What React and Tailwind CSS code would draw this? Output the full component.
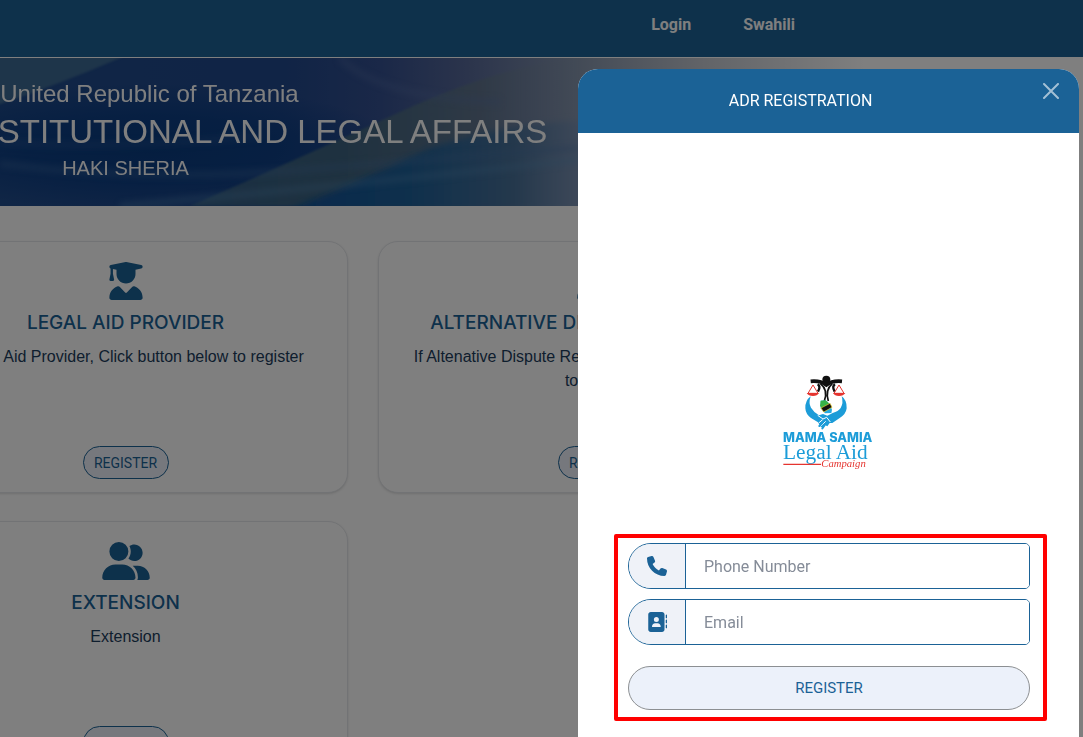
import React from 'react'
import { FaUserGraduate, FaUserGroup, FaPhone, FaAddressBook } from 'react-icons/fa6'

const cards = [
  {
    icon: FaUserGraduate,
    title: 'LEGAL AID PROVIDER',
    text: 'If Legal Aid Provider, Click button below to register',
  },
  {
    icon: FaUserGroup,
    title: 'ALTERNATIVE DISPUTE RESOLUTION',
    text: 'If Altenative Dispute Resolution, Click a button below to register',
  },
  { icon: FaUserGroup, title: 'EXTENSION', text: 'Extension', newRow: true },
]

function Navbar() {
  return (
    <nav className="flex h-[58px] justify-end gap-[52px] border-b border-white bg-[#1c6296] pt-[13px] pr-72 font-['Roboto',sans-serif] text-base font-bold text-white">
      <a href="#login">Login</a>
      <a href="#swahili">Swahili</a>
    </nav>
  )
}

function BannerArt() {
  return (
    <svg className="absolute inset-0 h-full w-full" viewBox="0 0 1083 148" preserveAspectRatio="none" aria-hidden="true">
      <defs>
        <linearGradient id="sky" x1="0" x2="1" y1="0" y2="0">
          <stop offset="0" stopColor="#204c8c" />
          <stop offset="0.26" stopColor="#20488c" />
          <stop offset="0.35" stopColor="#345090" />
          <stop offset="0.43" stopColor="#566898" />
          <stop offset="0.53" stopColor="#8494ac" />
          <stop offset="0.65" stopColor="#c4c8d0" />
          <stop offset="0.8" stopColor="#ffffff" />
        </linearGradient>
        <linearGradient id="wave" x1="0" x2="1" y1="0" y2="0">
          <stop offset="0" stopColor="#0e5098" />
          <stop offset="0.4" stopColor="#1e6098" />
          <stop offset="0.75" stopColor="#487098" />
          <stop offset="1" stopColor="#8094b4" />
        </linearGradient>
        <linearGradient id="band" x1="0" x2="1" y1="0" y2="0">
          <stop offset="0" stopColor="#346088" />
          <stop offset="0.4" stopColor="#3e6480" />
          <stop offset="0.75" stopColor="#60758c" stopOpacity="0.9" />
          <stop offset="1" stopColor="#8494ac" stopOpacity="0" />
        </linearGradient>
        <radialGradient id="deep" cx="0.5" cy="0.5" r="0.5">
          <stop offset="0" stopColor="#0a3c80" />
          <stop offset="0.5" stopColor="#0c3e84" stopOpacity="0.9" />
          <stop offset="1" stopColor="#0c3c84" stopOpacity="0" />
        </radialGradient>
        <filter id="soft" x="-10%" y="-60%" width="120%" height="220%">
          <feGaussianBlur stdDeviation="3" />
        </filter>
        <filter id="edge" x="-5%" y="-5%" width="110%" height="110%">
          <feGaussianBlur stdDeviation="1" />
        </filter>
      </defs>
      <rect width="1083" height="148" fill="url(#sky)" />
      <ellipse cx="150" cy="90" rx="250" ry="64" fill="url(#deep)" />
      <path d="M-10 -10H140L120 0Q60 26 0 46L-10 48Z" fill="#427096" opacity="0.85" filter="url(#edge)" />
      <path d="M190 148Q300 100 400 54T579 0V148Z" fill="url(#band)" filter="url(#edge)" />
      <path d="M290 152Q370 118 430 90Q500 66 586 62V152Z" fill="url(#wave)" filter="url(#soft)" />
      <g fill="none" strokeWidth="6" filter="url(#soft)">
        <path d="M0 106Q150 124 300 112T579 90" stroke="#4a76a8" opacity="0.4" />
        <path d="M120 148Q300 132 579 102" stroke="#5a8cb8" opacity="0.4" />
        <path d="M340 0Q380 40 500 44" stroke="#5a74a8" opacity="0.4" />
        <path d="M0 84Q120 92 260 78" stroke="#3a64a0" opacity="0.3" />
      </g>
    </svg>
  )
}

function Banner() {
  return (
    <header className="relative h-[148px] overflow-hidden">
      <BannerArt />
      <div className="relative -mr-[215px] -ml-[97px] grid grid-cols-3 gap-x-[30px] pt-4 text-white">
        <div className="flex flex-col items-center whitespace-nowrap">
          <p className="text-2xl leading-10">The United Republic of Tanzania</p>
          <h1 className="text-[33px] leading-9">MINISTRY OF CONSTITUTIONAL AND LEGAL AFFAIRS</h1>
          <p className="text-xl leading-9">HAKI SHERIA</p>
        </div>
      </div>
    </header>
  )
}

function Card({ icon: Icon, title, text, newRow }) {
  return (
    <section
      className={`flex h-[252px] flex-col items-center rounded-[20px] border border-gray-200 bg-white px-8 pt-5 pb-[13px] text-center shadow ${newRow ? 'col-start-1' : ''}`}
    >
      <Icon className="h-[38px] w-12 shrink-0 text-[#1b6296]" />
      <h2 className="mt-[5px] font-['Inter',sans-serif] text-[19px] leading-9 font-medium whitespace-nowrap text-[#1b6296]">{title}</h2>
      <p className="mt-1 text-base leading-6 text-[#1c3c5c]">{text}</p>
      <button
        type="button"
        className="mt-auto h-[33px] w-[86px] shrink-0 rounded-full border border-[#1b6296] bg-[#ecf1fa] font-['Roboto',sans-serif] text-sm text-[#1b6296]"
      >
        REGISTER
      </button>
    </section>
  )
}

function CampaignLogo() {
  return (
    <svg className="mx-auto h-[115px] w-[115px]" viewBox="0 0 345 345" role="img" aria-label="Mama Samia Legal Aid Campaign">
      {/* figure holding the scales */}
      <circle cx="166" cy="44" r="12" fill="#111" />
      <g fill="none" stroke="#111" strokeLinecap="butt">
        <path d="M119 49Q148 46 166 60Q184 46 213 49" strokeWidth="11" />
        <path d="M148 56Q172 74 160 108M184 56Q162 74 172 108" strokeWidth="5" />
        <path d="M140 58Q150 64 141 80M192 58Q182 64 191 80" strokeWidth="7" />
      </g>
      <g fill="none" stroke="#e5342f" strokeWidth="3">
        <path d="M126 60L111 85H141ZM204 60L189 85H219Z" />
      </g>
      <path d="M107 84H144Q139 93 126 93Q112 93 107 84ZM186 84H223Q217 93 204 93Q191 93 186 84Z" fill="#e5342f" />
      {/* map */}
      <path d="M149 107L164 106L176 117L183 134L181 144L162 145L149 130Z" fill="#26a9e0" />
      <path d="M149 107L164 106L176 117L152 132L147 122Z" fill="#35b34a" />
      <path d="M150 129L177 115L183 127L158 141Z" fill="#111" stroke="#f4d72c" strokeWidth="2" />
      {/* hands */}
      <path d="M119 94Q102 107 103 130Q104 148 120 159L141 172L148 184L156 190L162 180L169 184L176 174L184 174L205 160Q225 148 227 130Q228 105 212 94Q218 114 209 129Q202 139 185 144L169 152L156 147L144 151Q127 140 120 128Q112 115 119 94Z" fill="#1c9cd8" />
      <path d="M140 151L156 162L167 157L178 171M143 174L155 164M149 184L164 169" fill="none" stroke="#fff" strokeWidth="3" />
      <path d="M145 183L154 174M154 190L164 176" stroke="#1c9cd8" strokeWidth="6" strokeLinecap="round" />
      <text x="36" y="231" fill="#1c9cd8" fontFamily="Inter, sans-serif" fontWeight="800" fontSize="38">MAMA SAMIA</text>
      <text x="36" y="281" fill="#1c9cd8" fontFamily="'Liberation Serif', serif" fontSize="64">Legal Aid</text>
      <path d="M37 298H150" stroke="#e5342f" strokeWidth="4" />
      <text x="151" y="306" fill="#e5342f" fontFamily="'Liberation Serif', serif" fontStyle="italic" fontSize="32">Campaign</text>
    </svg>
  )
}

function Field({ id, type, label, icon: Icon }) {
  return (
    <div className="flex h-[46px] overflow-hidden rounded-l-[23px] rounded-r-[5px] border border-[#1b6296]">
      <label htmlFor={id} aria-label={label} className="flex w-14 shrink-0 items-center justify-center bg-[#eff2f8] text-[#1b6296]">
        <Icon className="size-5" />
      </label>
      <input
        id={id}
        type={type}
        placeholder={label}
        className="min-w-0 flex-1 border-l border-[#1b6296] bg-white px-[18px] pt-0.5 text-base text-gray-700 outline-none placeholder:text-[#858c98]"
      />
    </div>
  )
}

function RegistrationModal() {
  return (
    <div role="dialog" aria-labelledby="modal-title" className="absolute top-[69px] right-1 bottom-0 w-[501px] overflow-hidden rounded-t-[20px] bg-white font-['Roboto',sans-serif]">
      <div className="flex h-16 bg-[#1b6296] text-white">
        <h2 id="modal-title" className="flex-1 text-center text-base leading-[64px]">ADR REGISTRATION</h2>
        <button type="button" aria-label="Close" className="flex h-11 w-14 items-center justify-center opacity-60">
          <svg className="size-4" viewBox="0 0 16 16" fill="none" stroke="currentColor" strokeWidth="2" strokeLinecap="round">
            <path d="M1 1l14 14M15 1L1 15" />
          </svg>
        </button>
      </div>
      <div className="pt-[232px]">
        <CampaignLogo />
        <form className="mt-[54px] mr-8 ml-9 flex flex-col gap-2.5 rounded-xs border-4 border-[#ff0000] pt-[5px] pr-[13px] pb-[7px] pl-2.5">
          <Field id="phone" type="tel" label="Phone Number" icon={FaPhone} />
          <Field id="email" type="email" label="Email" icon={FaAddressBook} />
          <button type="button" className="mt-[11px] h-11 rounded-full border border-[#8c8f92] bg-[#ecf1fa] text-[15px] text-[#1b6296]">
            REGISTER
          </button>
        </form>
      </div>
    </div>
  )
}

export default function App() {
  return (
    <div className="relative h-screen overflow-hidden bg-white font-['Liberation_Sans',sans-serif]">
      <Navbar />
      <Banner />
      <main className="-mr-[215px] -ml-[97px] grid grid-cols-3 gap-x-[30px] gap-y-7 pt-[35px]">
        {cards.map((card) => (
          <Card key={card.title} {...card} />
        ))}
      </main>
      <div className="absolute inset-0 bg-black/50" />
      <RegistrationModal />
    </div>
  )
}
